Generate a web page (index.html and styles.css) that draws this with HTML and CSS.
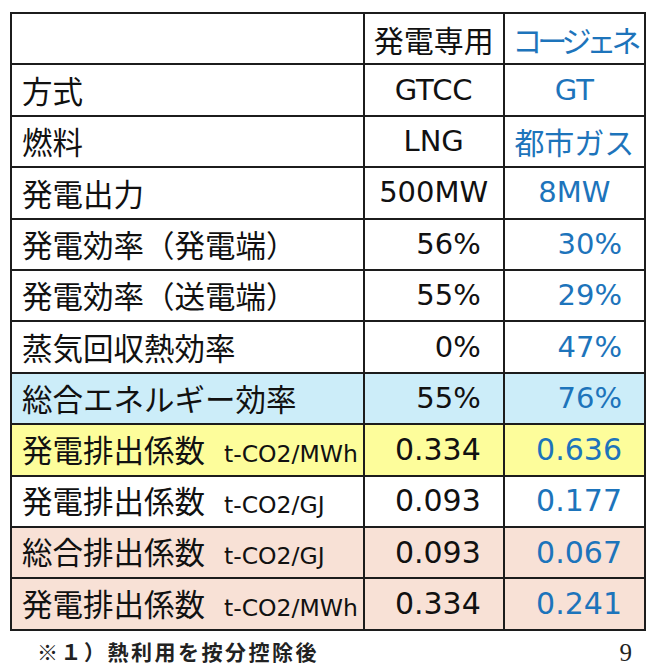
FILE: index.html
```html
<!DOCTYPE html>
<html lang="ja">
<head>
<meta charset="utf-8">
<link rel="stylesheet" href="styles.css">
</head>
<body>
<div class="page">
  <table class="grid">
    <colgroup><col class="c1"><col class="c2"><col class="c3"></colgroup>
    <tr><td></td><td class="ctr">発電専用</td><td class="ctr blue tight">コージェネ</td></tr>
    <tr><td class="lbl">方式</td><td class="ctr num">GTCC</td><td class="ctr num blue">GT</td></tr>
    <tr><td class="lbl">燃料</td><td class="ctr num">LNG</td><td class="ctr blue">都市ガス</td></tr>
    <tr><td class="lbl">発電出力</td><td class="ctr num">500MW</td><td class="ctr num blue">8MW</td></tr>
    <tr><td class="lbl">発電効率（発電端）</td><td class="rt num">56%</td><td class="rt num blue">30%</td></tr>
    <tr><td class="lbl">発電効率（送電端）</td><td class="rt num">55%</td><td class="rt num blue">29%</td></tr>
    <tr><td class="lbl">蒸気回収熱効率</td><td class="rt num">0%</td><td class="rt num blue">47%</td></tr>
    <tr class="sky"><td class="lbl">総合エネルギー効率</td><td class="rt num">55%</td><td class="rt num blue">76%</td></tr>
    <tr class="lemon"><td class="lbl">発電排出係数<span class="unit">t-CO2/MWh</span></td><td class="rt num big">0.334</td><td class="rt num big blue">0.636</td></tr>
    <tr><td class="lbl">発電排出係数<span class="unit">t-CO2/GJ</span></td><td class="rt num big">0.093</td><td class="rt num big blue">0.177</td></tr>
    <tr class="peach"><td class="lbl">総合排出係数<span class="unit">t-CO2/GJ</span></td><td class="rt num big">0.093</td><td class="rt num big blue">0.067</td></tr>
    <tr class="peach"><td class="lbl">発電排出係数<span class="unit">t-CO2/MWh</span></td><td class="rt num big">0.334</td><td class="rt num big blue">0.241</td></tr>
  </table>
  <div class="foot">
    <span class="note">※１）熱利用を按分控除後</span>
    <span class="pageno">9</span>
  </div>
</div>
</body>
</html>
```
FILE: styles.css
```css
html, body {
  margin: 0;
  padding: 0;
  background: #ffffff;
}
.page {
  width: 652px;
  height: 667px;
  padding: 12px 0 0 10px;
  box-sizing: border-box;
  font-family: "Noto Sans CJK JP", "DejaVu Sans", sans-serif;
  color: #111;
}
.grid {
  border-collapse: collapse;
  table-layout: fixed;
  width: 636px;
}
.c1 { width: 352px; }
.c2 { width: 140px; }
.c3 { width: 141px; }
.grid td {
  border: 2px solid #1c1c1c;
  height: 49.4px;
  padding: 0;
  font-size: 30px;
  line-height: 1;
  white-space: nowrap;
  overflow: hidden;
  vertical-align: middle;
}
.lbl { padding-left: 10px !important; font-size: 30.5px !important; }
.ctr { text-align: center; }
.tight { letter-spacing: -5px; }
.rt { text-align: right; padding-right: 22px !important; }
.num { font-family: "DejaVu Sans", sans-serif; font-size: 29px !important; }
.big { font-size: 30px !important; }
.blue { color: #1d74bb; }
.unit {
  font-family: "DejaVu Sans", sans-serif;
  font-size: 23.5px;
  margin-left: 19px;
}
.sky td { background: #ccedf9; }
.lemon td { background: #fdfd9b; }
.peach td { background: #f8e1d6; }
.foot {
  display: flex;
  justify-content: space-between;
  align-items: center;
  padding: 4px 20px 0 27px;
}
.note {
  font-weight: bold;
  font-size: 21px;
  letter-spacing: 2.5px;
  color: #222;
}
.pageno {
  font-family: "Liberation Serif", serif;
  font-size: 25px;
  color: #222;
  margin-top: 4px;
}
```
